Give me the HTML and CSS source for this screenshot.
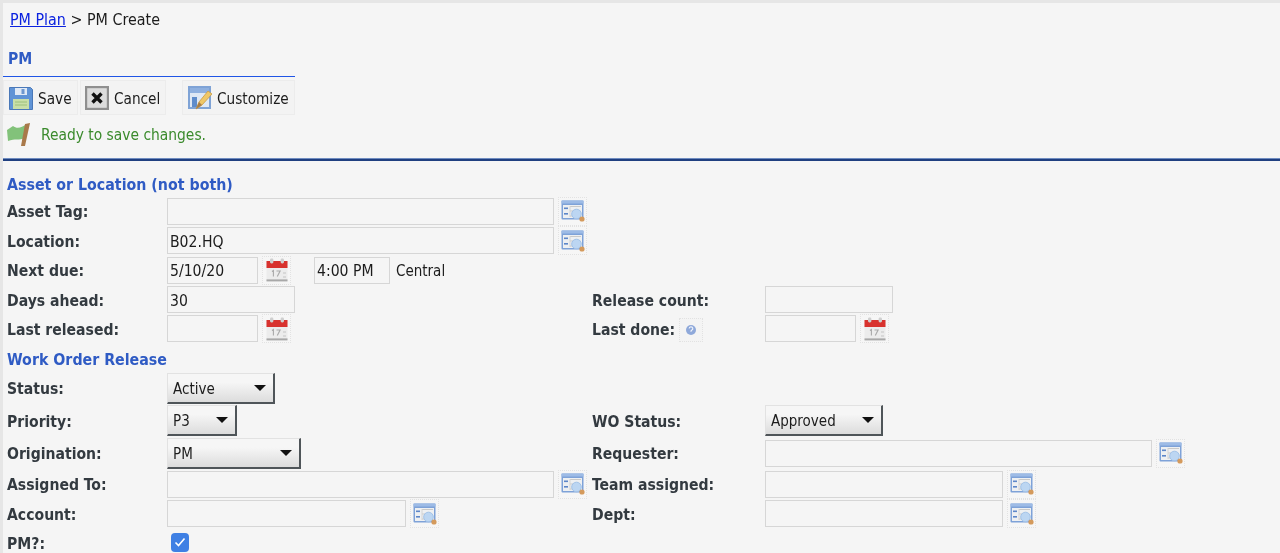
FILE: index.html
```html
<!DOCTYPE html>
<html lang="en">
<head>
<meta charset="utf-8">
<title>PM Create</title>
<link rel="stylesheet" href="styles.css">
</head>
<body>
<svg class="defs" width="0" height="0" aria-hidden="true">
  <symbol id="i-lookup" viewBox="0 0 24 22">
    <rect x="0.5" y="0.5" width="22" height="19" rx="1" fill="#7ea2d8"/>
    <rect x="0.5" y="0.5" width="22" height="3" fill="#9dbbe6"/>
    <rect x="2" y="5" width="19" height="13" fill="#eef0f2"/>
    <rect x="3" y="7.5" width="4" height="1.6" fill="#5d86c8"/>
    <rect x="3" y="13" width="4" height="1.6" fill="#5d86c8"/>
    <path d="M9 6.5h11M9 11h5M9 16h4" stroke="#c9c9c9" stroke-width="1" fill="none"/>
    <path d="M9 6v11" stroke="#d4d4d4" stroke-width="1" fill="none"/>
    <circle cx="15.5" cy="14" r="4.8" fill="#bcd6f2" stroke="#a3c3e8"/>
    <circle cx="21" cy="19" r="2.6" fill="#d49a5c"/>
  </symbol>
  <symbol id="i-cal" viewBox="0 0 22 24">
    <rect x="0.5" y="3" width="21" height="20" fill="#ececec"/>
    <rect x="0.5" y="3" width="21" height="7" fill="#d8322e"/>
    <rect x="4" y="0.5" width="3.4" height="5" rx="1.4" fill="#cfcfcf"/>
    <rect x="14.6" y="0.5" width="3.4" height="5" rx="1.4" fill="#cfcfcf"/>
    <rect x="0.5" y="21.4" width="21" height="2" fill="#a8a8a8"/>
    <path d="M6 13.5l1.4-1v6M10.5 13h3.6l-2.8 5.4" stroke="#a9a9a9" stroke-width="1.1" fill="none"/>
    <path d="M17 15h3M17 19h3" stroke="#c4c4c4" fill="none"/>
  </symbol>
</svg>

<main class="page">
  <nav class="crumbs"><a href="#plan">PM Plan</a> &gt; PM Create</nav>
  <h1 class="title">PM</h1>

  <div class="toolbar">
    <button class="tool tool-save" type="button">
      <svg class="tool-icon" viewBox="0 0 24 24" aria-hidden="true">
        <path d="M0.5 1.5h21l2 2v20h-23z" fill="#5f93d6" stroke="#4a78b8"/>
        <rect x="6" y="2" width="12" height="7" fill="#dfe9f6"/>
        <rect x="12.5" y="3" width="3" height="5" fill="#6d97cf"/>
        <rect x="4" y="13" width="16" height="10" fill="#c9dfa8"/>
        <path d="M6 16h12M6 19h12" stroke="#9cc07a" fill="none"/>
      </svg>Save</button>
    <button class="tool tool-cancel" type="button">
      <svg class="tool-icon" viewBox="0 0 24 24" aria-hidden="true">
        <rect x="1" y="1" width="22" height="22" fill="#dcdcdc" stroke="#8f8f8f" stroke-width="2.4"/>
        <path d="M7.5 7.5l9 9M16.5 7.5l-9 9" stroke="#111" stroke-width="3.4" fill="none"/>
      </svg>Cancel</button>
    <button class="tool tool-custom" type="button">
      <svg class="tool-icon" viewBox="0 0 24 24" aria-hidden="true">
        <rect x="1" y="1" width="21" height="21" fill="#dfe8f4" stroke="#7fa3d6" stroke-width="2"/>
        <rect x="2" y="2" width="19" height="5" fill="#8fb0df"/>
        <rect x="4" y="11" width="5" height="10" fill="#5f8ccb"/>
        <path d="M8 23l3-7L20 5l4 3-10 11z" fill="#efc767" stroke="#c99a45" stroke-width="0.8"/>
        <path d="M8 23l3-7 3 3z" fill="#a77c48"/>
      </svg>Customize</button>
  </div>

  <p class="status">
    <svg class="flag" viewBox="0 0 24 24" aria-hidden="true">
      <path d="M1 7l6-4c4 3 8 2 14-2l-2 14c-6 3-10 0-17 3z" fill="#82c27a"/>
      <path d="M19 1l5-1-5 23h-4z" fill="#a9794a"/>
    </svg>Ready to save changes.</p>
  <hr class="rule">

  <section class="form">
    <h2 class="section first">Asset or Location (not both)</h2>

    <div class="row r-asset">
      <label class="lbl">Asset Tag:</label>
      <div class="cell"><input class="in w-387"><span class="tile"><svg class="ic"><use href="#i-lookup"/></svg></span></div>
    </div>
    <div class="row r-loc">
      <label class="lbl">Location:</label>
      <div class="cell"><input class="in w-387" value="B02.HQ"><span class="tile"><svg class="ic"><use href="#i-lookup"/></svg></span></div>
    </div>
    <div class="row r-due">
      <label class="lbl">Next due:</label>
      <div class="cell"><input class="in w-91" value="5/10/20"><span class="tile"><svg class="ic"><use href="#i-cal"/></svg></span><input class="in w-76 time" value="4:00 PM"><span class="zone">Central</span></div>
    </div>
    <div class="row r-days">
      <label class="lbl">Days ahead:</label>
      <div class="cell"><input class="in w-128" value="30"></div>
      <label class="lbl">Release count:</label>
      <div class="cell"><input class="in w-128"></div>
    </div>
    <div class="row r-last">
      <label class="lbl">Last released:</label>
      <div class="cell"><input class="in w-91"><span class="tile"><svg class="ic"><use href="#i-cal"/></svg></span></div>
      <label class="lbl lbl-help">Last done:<span class="help"><svg viewBox="0 0 12 12" aria-hidden="true"><circle cx="6" cy="6" r="5" fill="#8fa9da"/><path d="M4.2 4.6a1.8 1.8 0 1 1 2.4 1.7L6 7v.8" stroke="#eef2fa" stroke-width="1.2" fill="none"/></svg></span></label>
      <div class="cell"><input class="in w-91"><span class="tile"><svg class="ic"><use href="#i-cal"/></svg></span></div>
    </div>

    <h2 class="section second">Work Order Release</h2>

    <div class="row r-status">
      <label class="lbl">Status:</label>
      <div class="cell"><div class="sel w-108">Active<span class="caret"></span></div></div>
    </div>
    <div class="row r-prio">
      <label class="lbl">Priority:</label>
      <div class="cell"><div class="sel w-70">P3<span class="caret"></span></div></div>
      <label class="lbl">WO Status:</label>
      <div class="cell"><div class="sel w-118">Approved<span class="caret"></span></div></div>
    </div>
    <div class="row r-orig">
      <label class="lbl">Origination:</label>
      <div class="cell"><div class="sel w-134">PM<span class="caret"></span></div></div>
      <label class="lbl">Requester:</label>
      <div class="cell"><input class="in w-387"><span class="tile"><svg class="ic"><use href="#i-lookup"/></svg></span></div>
    </div>
    <div class="row r-assign">
      <label class="lbl">Assigned To:</label>
      <div class="cell"><input class="in w-387"><span class="tile"><svg class="ic"><use href="#i-lookup"/></svg></span></div>
      <label class="lbl">Team assigned:</label>
      <div class="cell"><input class="in w-238"><span class="tile"><svg class="ic"><use href="#i-lookup"/></svg></span></div>
    </div>
    <div class="row r-acct">
      <label class="lbl">Account:</label>
      <div class="cell"><input class="in w-239"><span class="tile"><svg class="ic"><use href="#i-lookup"/></svg></span></div>
      <label class="lbl">Dept:</label>
      <div class="cell"><input class="in w-238"><span class="tile"><svg class="ic"><use href="#i-lookup"/></svg></span></div>
    </div>
    <div class="row r-pm">
      <label class="lbl">PM?:</label>
      <div class="cell"><span class="check"><svg viewBox="0 0 18 18" aria-hidden="true"><path d="M4.5 9.5l3 3 6-7" stroke="#fff" stroke-width="1.6" fill="none"/></svg></span></div>
    </div>
  </section>
</main>
</body>
</html>
```
FILE: styles.css
```css
* { box-sizing: border-box; }
html, body { height: 100%; }
body {
  margin: 0;
  background: #e6e6e6;
  font-family: "DejaVu Sans Condensed", "DejaVu Sans", sans-serif;
  font-size: 15.6px;
  color: #2b2b2b;
  overflow: hidden;
}
.defs { position: absolute; }
.page {
  margin: 3px 0 0 3px;
  height: 550px;
  background: #f5f5f5;
  overflow: hidden;
  filter: blur(0.35px);
}
.crumbs { height: 34px; padding: 8px 0 0 7px; font-size: 15.9px; line-height: 18px; color: #1c1c1c; }
.crumbs a { color: #0b22e0; }
.title {
  margin: 0;
  height: 39px;
  padding: 13px 0 0 5px;
  font-size: 15.6px;
  line-height: 18px;
  color: #2f5bc4;
}
.toolbar {
  display: flex;
  width: 292px;
  height: 39px;
  padding-top: 3px;
  border-top: 1px solid #1f55e6;
  font-size: 15.2px;
}
.tool {
  display: flex;
  align-items: center;
  height: 35px;
  margin: 0;
  padding: 2px 0 0 5px;
  background: #f3f3f3;
  border: 1px solid #ececec;
  font: inherit;
  color: #1c1c1c;
}
.tool-save { width: 75px; }
.tool-cancel { width: 86px; margin-left: 2px; padding-left: 4px; }
.tool-custom { width: 113px; margin-left: 16px; }
.tool-icon { width: 24px; height: 24px; margin-top: -2px; margin-right: 5px; flex: none; }
.status {
  display: flex;
  align-items: center;
  margin: 0;
  height: 43px;
  padding: 0 0 3px 3px;
  font-size: 15.4px;
  color: #3a8a2c;
}
.flag { width: 24px; height: 24px; margin-right: 11px; }
.rule {
  margin: 0;
  height: 3px;
  border: 0;
  border-top: 1px solid #6f8cc0;
  background: #1f3f80;
}
.form { padding-left: 4px; }
.section {
  margin: 0;
  font-size: 15.8px;
  line-height: 18px;
  font-weight: bold;
  color: #2f5bc4;
}
.section.first { height: 19px; margin-top: 15px; }
.section.second { height: 19px; margin-top: 8px; }
.row {
  display: grid;
  grid-template-columns: 160px 425px 173px 1fr;
  align-items: center;
}
.r-asset { height: 30px; margin-top: 1px; }
.r-loc { height: 29px; }
.r-due { height: 30px; }
.r-days { height: 29px; }
.r-last { height: 29px; }
.r-status { height: 32px; margin-top: 2px; }
.r-prio { height: 33px; }
.r-orig { height: 32px; }
.r-assign { height: 30px; }
.r-acct { height: 29px; }
.r-pm { height: 29px; }
.lbl {
  padding-top: 2px;
  font-weight: bold;
  color: #333a40;
  line-height: 18px;
  white-space: nowrap;
}
.lbl-help { display: flex; align-items: center; }
.help {
  display: flex;
  align-items: center;
  justify-content: center;
  width: 24px;
  height: 24px;
  margin-left: 4px;
  border: 1px dotted #e2e2e2;
  background: #f4f4f4;
}
.help svg { width: 12px; height: 12px; }
.cell { display: flex; align-items: center; }
.in {
  height: 27px;
  margin: 0;
  padding: 2px 2px 0;
  background: #f5f5f5;
  border: 1.5px solid #d6d6d6;
  font: inherit;
  color: #1c1c1c;
  outline: 0;
  flex: none;
}
.w-91 { width: 91px; }
.w-76 { width: 76px; }
.w-128 { width: 128px; }
.w-238 { width: 238px; }
.w-239 { width: 239px; }
.w-387 { width: 387px; }
.time { margin-left: 23px; }
.zone { margin-left: 6px; padding-top: 2px; font-size: 15px; color: #1c1c1c; }
.tile {
  display: flex;
  align-items: center;
  justify-content: center;
  flex: none;
  width: 29px;
  height: 29px;
  margin-left: 4px;
  border: 1px dotted #e2e2e2;
  background: #f6f6f6;
}
.ic { width: 24px; height: 24px; }
.sel {
  display: flex;
  align-items: center;
  justify-content: space-between;
  height: 31px;
  padding: 2px 7px 0 5px;
  background: linear-gradient(#f6f6f6 30%, #dcdcdc);
  border: 1px solid #e2e2e2;
  border-right: 2px solid #4f5559;
  border-bottom: 2px solid #4f5559;
  font-size: 15px;
  color: #1c1c1c;
}
.w-70 { width: 70px; }
.w-108 { width: 108px; }
.w-118 { width: 118px; }
.w-134 { width: 134px; }
.caret {
  width: 0;
  height: 0;
  margin-top: -2px;
  border-left: 6px solid transparent;
  border-right: 6px solid transparent;
  border-top: 6px solid #111;
}
.check {
  display: block;
  width: 18px;
  height: 19px;
  margin-left: 4px;
  border-radius: 4px;
  background: #3f80e4;
}
.check svg { display: block; width: 18px; height: 18px; }
```
